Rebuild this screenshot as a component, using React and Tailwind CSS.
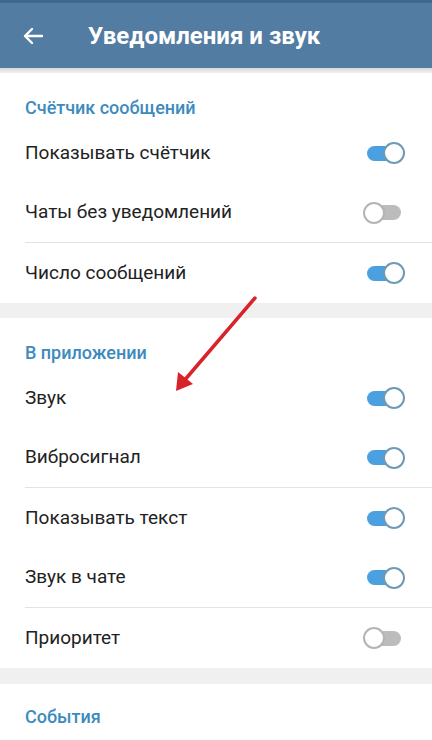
import React from 'react';

const sections = [
  {
    title: 'Счётчик сообщений',
    rows: [
      { label: 'Показывать счётчик', on: true },
      { label: 'Чаты без уведомлений', on: false, line: true },
      { label: 'Число сообщений', on: true },
    ],
  },
  {
    title: 'В приложении',
    rows: [
      { label: 'Звук', on: true },
      { label: 'Вибросигнал', on: true, line: true },
      { label: 'Показывать текст', on: true },
      { label: 'Звук в чате', on: true, line: true },
      { label: 'Приоритет', on: false },
    ],
  },
];

function Toggle({ on }) {
  return (
    <div className="relative w-[42px] h-[22px] flex items-center">
      <div className={`ml-[4px] w-[34px] h-[15px] rounded-full ${on ? 'bg-[#4ba1df]' : 'bg-[#bcbcbc]'}`} />
      <div
        className={`absolute top-0 w-[22px] h-[22px] rounded-full bg-white border-2 ${
          on ? 'right-0 border-[#6e9ab5]' : 'left-0 border-[#b4b4b4]'
        }`}
      />
    </div>
  );
}

function Row({ label, on, line }) {
  return (
    <div className="pl-[25px]">
      <div className={`h-[60px] flex items-center justify-between pr-[27px] ${line ? 'border-b border-[#e3e3e3]' : ''}`}>
        <span className="text-[19px] text-[#222]">{label}</span>
        <Toggle on={on} />
      </div>
    </div>
  );
}

export default function App() {
  return (
    <div className="relative w-[432px] h-[740px] overflow-hidden bg-[#f0f0f0]" style={{ fontFamily: 'Roboto, "Noto Sans", sans-serif' }}>
      <div className="h-[3px] bg-[#3f6a8f]" />
      <div className="h-[65px] bg-[#527ca2] flex items-center">
        <svg width="24" height="24" viewBox="0 0 24 24" className="ml-[21px]" fill="none" stroke="white" strokeWidth="2.4" strokeLinecap="round" strokeLinejoin="round">
          <path d="M21 12H4M11 5l-7 7 7 7" />
        </svg>
        <h1 className="ml-[43px] text-white text-[24px] font-bold">Уведомления и звук</h1>
      </div>
      <div className="h-[5px] bg-gradient-to-b from-[#d8d8d8] to-[#f0f0f0]" />

      {sections.map((s, i) => (
        <div key={i} className={`bg-white ${i === 0 ? 'mt-0' : 'mt-[15px]'}`}>
          <div className="pl-[25px] pt-[22px] h-[50px] text-[18px] leading-[25px] font-medium text-[#3d8bbd]">{s.title}</div>
          {s.rows.map((r) => (
            <Row key={r.label} {...r} />
          ))}
        </div>
      ))}

      <div className="bg-white mt-[16px] h-[100px]">
        <div className="pl-[25px] pt-[20px] text-[18px] leading-[25px] font-medium text-[#3d8bbd]">События</div>
      </div>

      <svg className="absolute left-0 top-0 pointer-events-none" width="432" height="740">
        <line x1="255" y1="298" x2="183" y2="382" stroke="#d8232a" strokeWidth="3.5" strokeLinecap="round" />
        <path d="M176 391 L178 372 L193 384 Z" fill="#d8232a" />
      </svg>
    </div>
  );
}
